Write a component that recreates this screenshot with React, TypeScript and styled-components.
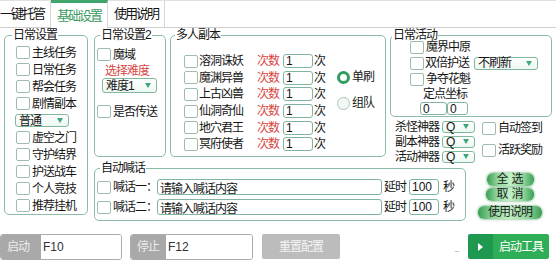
import React from 'react';
import styled, { createGlobalStyle, css } from 'styled-components';

const GlobalStyle = createGlobalStyle`
  html, body { margin: 0; padding: 0; background: #fff; }
  body {
    font-family: "Liberation Sans", "Noto Sans CJK SC", sans-serif;
    font-size: 12px;
    line-height: 14px;
    color: #151515;
    letter-spacing: -1px;
  }
  * { box-sizing: border-box; }
`;

const Page = styled.div`
  width: 556px;
  height: 267px;
  overflow: hidden;
  background: #fff;
`;

const TabStrip = styled.div`
  display: flex;
  height: 28px;
  margin-left: -6px;
  border-top: 1px solid #e0e0e0;
  border-bottom: 1px solid #d0d0d0;
`;

const Tab = styled.div<{ $active?: boolean }>`
  display: flex;
  align-items: center;
  padding: 0 6px;
  font-size: 13px;
  letter-spacing: -2px;
  border-right: 1px solid #d6d6d6;
  ${(p) =>
    p.$active &&
    css`
      margin: -1px 0;
      padding-top: 1px;
      background: #fff;
      color: #3a9a62;
      border-top: 3px solid #3fa56b;
    `}
`;

const Main = styled.div`
  display: grid;
  grid-template-columns: 84px 74px 216px 80px 82px;
  grid-template-rows: 133px 59px;
  column-gap: 4px;
  grid-template-areas:
    'daily daily2 multi side side'
    'daily shout shout shout tools';
  padding: 1px 0 0 4px;
`;

const Group = styled.fieldset<{ $area: string; $ml?: number; $mr?: number; $mb?: number }>`
  grid-area: ${(p) => p.$area};
  min-width: 0;
  margin: 0 ${(p) => p.$mr ?? 0}px ${(p) => p.$mb ?? 0}px ${(p) => p.$ml ?? 0}px;
  padding: 0;
  border: 1px solid #8cbca8;
  border-radius: 5px;
`;

const Legend = styled.legend<{ $indent: number }>`
  margin-left: ${(p) => p.$indent}px;
  padding: 0 1px;
  font-size: 12px;
  line-height: 12px;
`;

const Body = styled.div<{ $pt: number; $pl: number }>`
  display: flex;
  flex-direction: column;
  padding: ${(p) => Math.max(p.$pt, 0)}px 0 0 ${(p) => p.$pl}px;
  margin-top: ${(p) => Math.min(p.$pt, 0)}px;
`;

const Row = styled.div<{ $h: number; $ml?: number; $mt?: number }>`
  display: flex;
  align-items: center;
  height: ${(p) => p.$h}px;
  margin-left: ${(p) => p.$ml ?? 0}px;
  margin-top: ${(p) => p.$mt ?? 0}px;
  white-space: nowrap;
`;

const Check = styled.span`
  flex: none;
  width: 14px;
  height: 13px;
  border: 1px solid #9fbcae;
  border-radius: 2px;
  background: #fff;
`;

const Text = styled.span<{ $ml?: number; $w?: number; $red?: boolean }>`
  flex: none;
  margin-left: ${(p) => p.$ml ?? 0}px;
  ${(p) => p.$w && `width: ${p.$w}px;`}
  ${(p) => p.$red && 'color: #d8453f;'}
`;

const Select = styled.div<{ $w: number; $h?: number; $ml?: number }>`
  flex: none;
  display: flex;
  align-items: center;
  justify-content: space-between;
  width: ${(p) => p.$w}px;
  height: ${(p) => p.$h ?? 13}px;
  margin-left: ${(p) => p.$ml ?? 0}px;
  padding: 0 5px 0 3px;
  border: 1px solid #80b89e;
  border-radius: 3px;
  background: linear-gradient(#fff, #edf7f1);
  font-size: 12px;
  line-height: 12px;
  &::after {
    content: '';
    border-top: 5px solid #3fa874;
    border-left: 3px solid transparent;
    border-right: 3px solid transparent;
  }
`;

const Field = styled.input<{ $w: number; $h: number; $ml?: number; $cjk?: boolean }>`
  flex: none;
  width: ${(p) => p.$w}px;
  height: ${(p) => p.$h}px;
  margin: 0 0 0 ${(p) => p.$ml ?? 0}px;
  padding: 0 0 0 2px;
  border: 1px solid #80b4a0;
  border-radius: 3px;
  background: #fff;
  color: #151515;
  outline: none;
  font-family: 'Liberation Sans', 'Noto Sans CJK SC', sans-serif;
  font-size: 12px;
  letter-spacing: ${(p) => (p.$cjk ? '-1px' : '0')};
`;

const Radio = styled.span<{ $on?: boolean }>`
  flex: none;
  width: 13px;
  height: 13px;
  border-radius: 50%;
  ${(p) =>
    p.$on
      ? css`
          border: 3px solid #2f9c5c;
          background: #fff;
        `
      : css`
          border: 1px solid #a9c5b6;
          background: #f3f8f5;
        `}
`;

const Columns = styled.div`
  display: flex;
`;

const Stack = styled.div<{ $ml?: number; $pt?: number }>`
  display: flex;
  flex-direction: column;
  margin-left: ${(p) => p.$ml ?? 0}px;
  padding-top: ${(p) => p.$pt ?? 0}px;
`;

const Side = styled.div`
  grid-area: side;
  display: flex;
  flex-direction: column;
`;

const Tools = styled.div`
  grid-area: tools;
  justify-self: start;
  width: 72px;
  display: flex;
  flex-direction: column;
  align-items: center;
  padding-top: 11px;
`;

const GlowButton = styled.div<{ $w: number; $mt?: number; $spaced?: boolean }>`
  display: flex;
  align-items: center;
  justify-content: center;
  width: ${(p) => p.$w}px;
  height: 13px;
  margin-top: ${(p) => p.$mt ?? 0}px;
  border-radius: 6px;
  background: linear-gradient(
    to right,
    #3a9d55 0%,
    #8fd59a 22%,
    #c3efc6 50%,
    #8fd59a 78%,
    #3a9d55 100%
  );
  box-shadow: 0 0 2px 1px rgba(80, 170, 100, 0.5);
  color: #1c1c1c;
  line-height: 13px;
  letter-spacing: ${(p) => (p.$spaced ? '3px' : '-1px')};
  padding-left: ${(p) => (p.$spaced ? 3 : 0)}px;
`;

const BottomBar = styled.div`
  display: flex;
  align-items: center;
  height: 27px;
  margin-top: 12px;
`;

const KeyGroup = styled.div<{ $w: number; $ml?: number }>`
  display: flex;
  width: ${(p) => p.$w}px;
  height: 26px;
  margin-left: ${(p) => p.$ml ?? 0}px;
  border: 1px solid #ababab;
  border-radius: 3px;
  overflow: hidden;
`;

const KeyLabel = styled.div<{ $w: number }>`
  display: flex;
  align-items: center;
  width: ${(p) => p.$w}px;
  padding-left: 6px;
  background: #a9a9a9;
  color: #ececec;
`;

const KeyValue = styled.div`
  flex: 1;
  display: flex;
  align-items: center;
  padding-left: 2px;
  background: #fff;
  letter-spacing: 0;
  color: #333;
`;

const GrayButton = styled.div`
  display: flex;
  align-items: center;
  justify-content: center;
  width: 78px;
  height: 25px;
  margin-left: 9px;
  border-radius: 2px;
  background: #bcbcbc;
  color: #f4f4f4;
`;

const Dash = styled.span`
  width: 4px;
  height: 1px;
  margin: 10px 9px 0 auto;
  background: #c8c8c8;
`;

const StartButton = styled.div`
  display: flex;
  width: 81px;
  height: 25px;
  margin-right: 7px;
  border-radius: 2px;
  overflow: hidden;
  color: #fff;
`;

const StartIcon = styled.div`
  display: flex;
  align-items: center;
  justify-content: center;
  width: 25px;
  background: #1f9850;
  &::before {
    content: '';
    border-left: 5px solid #fff;
    border-top: 4px solid transparent;
    border-bottom: 4px solid transparent;
  }
`;

const StartText = styled.div`
  flex: 1;
  display: flex;
  align-items: center;
  justify-content: center;
  background: #2fae57;
`;

const dailyTop = ['主线任务', '日常任务', '帮会任务', '剧情副本'];
const dailyBottom = ['虚空之门', '守护结界', '护送战车', '个人竞技', '推荐挂机'];
const dungeons = ['溶洞诛妖', '魔渊异兽', '上古凶兽', '仙洞奇仙', '地穴君王', '冥府使者'];
const artifacts = ['杀怪神器', '副本神器', '活动神器'];

const CheckRow = ({ label, h }: { label: string; h: number }) => (
  <Row $h={h}>
    <Check />
    <Text $ml={2}>{label}</Text>
  </Row>
);

const ShoutRow = ({ label }: { label: string }) => (
  <Row $h={20}>
    <Check />
    <Text $ml={2} $w={44}>
      {label}
    </Text>
    <Field $w={225} $h={16} $cjk readOnly value="请输入喊话内容" />
    <Text $ml={2}>延时</Text>
    <Field $w={30} $h={16} $ml={3} readOnly value="100" />
    <Text $ml={4}>秒</Text>
  </Row>
);

export default function App() {
  return (
    <Page>
      <GlobalStyle />
      <TabStrip>
        <Tab>一键托管</Tab>
        <Tab $active>基础设置</Tab>
        <Tab>使用说明</Tab>
      </TabStrip>

      <Main>
        <Group $area="daily" $mb={6}>
          <Legend $indent={7}>日常设置</Legend>
          <Body $pt={3} $pl={11}>
            {dailyTop.map((t) => (
              <CheckRow key={t} label={t} h={17} />
            ))}
            <Row $h={17} $ml={-1}>
              <Select $w={54}>普通</Select>
            </Row>
            {dailyBottom.map((t) => (
              <CheckRow key={t} label={t} h={17} />
            ))}
          </Body>
        </Group>

        <Group $area="daily2" $ml={2} $mb={5}>
          <Legend $indent={5}>日常设置2</Legend>
          <Body $pt={5} $pl={2}>
            <CheckRow label="魔域" h={17} />
            <Row $h={15} $ml={8}>
              <Text $red>选择难度</Text>
            </Row>
            <Select $w={55} $h={15} $ml={5}>
              难度1
            </Select>
            <Row $h={17} $mt={10}>
              <Check />
              <Text $ml={2}>是否传送</Text>
            </Row>
          </Body>
        </Group>

        <Group $area="multi" $mb={5}>
          <Legend $indent={4}>多人副本</Legend>
          <Body $pt={12} $pl={13}>
            <Columns>
              <Stack>
                {dungeons.map((d) => (
                  <Row key={d} $h={16.6}>
                    <Check />
                    <Text $ml={1} $w={58}>
                      {d}
                    </Text>
                    <Text $red $w={22}>
                      次数
                    </Text>
                    <Field $w={30} $h={14} $ml={4} readOnly value="1" />
                    <Text $ml={1}>次</Text>
                  </Row>
                ))}
              </Stack>
              <Stack $ml={12} $pt={16}>
                <Row $h={16}>
                  <Radio $on />
                  <Text $ml={2}>单刷</Text>
                </Row>
                <Row $h={16} $mt={10}>
                  <Radio />
                  <Text $ml={2}>组队</Text>
                </Row>
              </Stack>
            </Columns>
          </Body>
        </Group>

        <Side>
          <Group $area="auto" $mr={4}>
            <Legend $indent={1}>日常活动</Legend>
            <Body $pt={-2} $pl={19}>
              <CheckRow label="魔界中原" h={16} />
              <Row $h={16}>
                <Check />
                <Text $ml={1} $w={44}>
                  双倍护送
                </Text>
                <Select $w={64} $ml={5}>
                  不刷新
                </Select>
              </Row>
              <CheckRow label="争夺花魁" h={16} />
              <Row $h={14} $ml={13}>
                <Text>定点坐标</Text>
              </Row>
              <Row $h={13} $ml={10} $mt={1}>
                <Field $w={27} $h={13} readOnly value="0" />
                <Field $w={21} $h={13} readOnly value="0" />
              </Row>
              <Row $h={1} />
            </Body>
          </Group>
          <Columns>
            <Stack $ml={5} $pt={2}>
              {artifacts.map((a) => (
                <Row key={a} $h={15}>
                  <Text $w={44}>{a}</Text>
                  <Select $w={33} $h={12} $ml={3}>
                    Q
                  </Select>
                </Row>
              ))}
            </Stack>
            <Stack $ml={7} $pt={4}>
              <CheckRow label="自动签到" h={14} />
              <Row $h={14} $mt={8}>
                <Check />
                <Text $ml={2}>活跃奖励</Text>
              </Row>
            </Stack>
          </Columns>
        </Side>

        <Group $area="shout" $ml={2} $mr={4}>
          <Legend $indent={5}>自动喊话</Legend>
          <Body $pt={3} $pl={2}>
            <ShoutRow label="喊话一：" />
            <ShoutRow label="喊话二：" />
          </Body>
        </Group>

        <Tools>
          <GlowButton $w={47} $spaced>
            全选
          </GlowButton>
          <GlowButton $w={48} $mt={2} $spaced>
            取消
          </GlowButton>
          <GlowButton $w={64} $mt={5}>
            使用说明
          </GlowButton>
        </Tools>
      </Main>

      <BottomBar>
        <KeyGroup $w={122}>
          <KeyLabel $w={40}>启动</KeyLabel>
          <KeyValue>F10</KeyValue>
        </KeyGroup>
        <KeyGroup $w={123} $ml={8}>
          <KeyLabel $w={35}>停止</KeyLabel>
          <KeyValue>F12</KeyValue>
        </KeyGroup>
        <GrayButton>重置配置</GrayButton>
        <Dash />
        <StartButton>
          <StartIcon />
          <StartText>启动工具</StartText>
        </StartButton>
      </BottomBar>
    </Page>
  );
}
